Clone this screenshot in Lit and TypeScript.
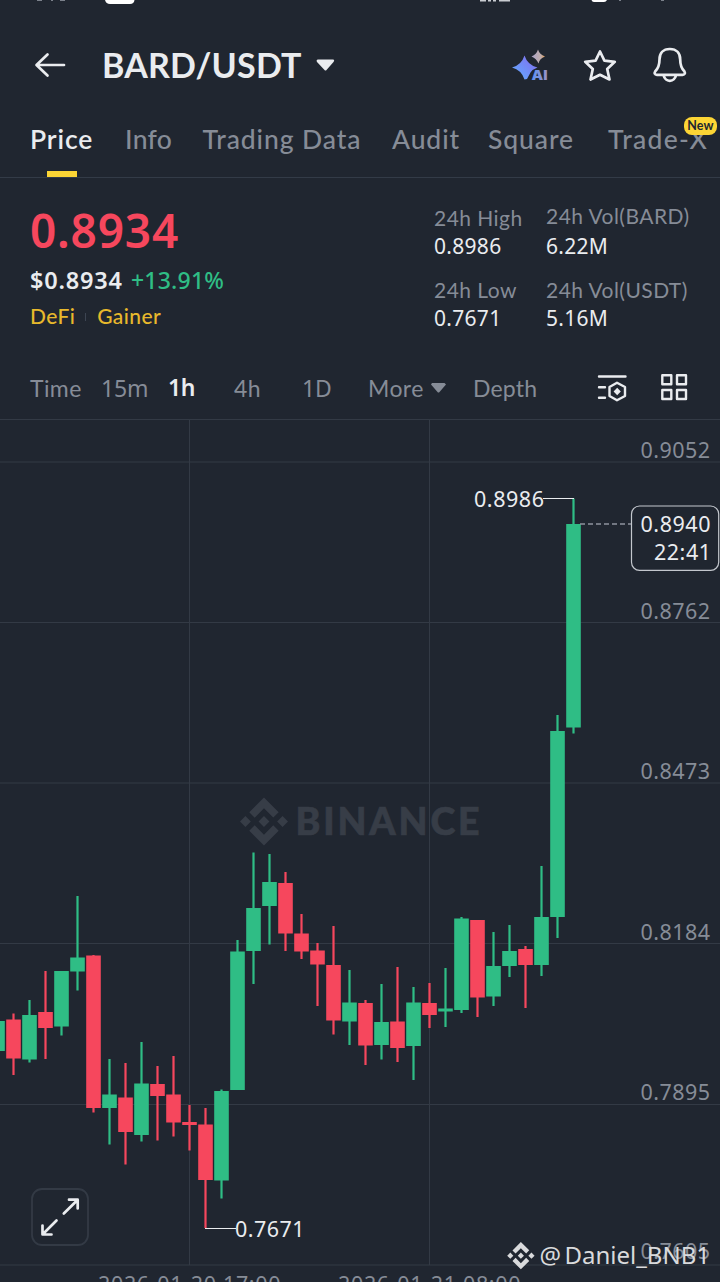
import { LitElement, html, svg, css } from "lit";
import { customElement, state } from "lit/decorators.js";
import { classMap } from "lit/directives/class-map.js";

type Candle = [dir: "u" | "d", high: number, top: number, bottom: number, low: number];

const CANDLES: Candle[] = [
  ["u", 1021, 1021, 1051, 1051],
  ["d", 1013.5, 1019.5, 1058.5, 1075],
  ["u", 1000, 1015, 1059.5, 1062.5],
  ["d", 971, 1012, 1028, 1059],
  ["u", 971, 971, 1026.5, 1035.5],
  ["u", 896, 957.5, 971.5, 990.5],
  ["d", 955, 955.5, 1108, 1112.5],
  ["u", 1059, 1094.5, 1108, 1144.5],
  ["d", 1063, 1097.5, 1132, 1164.5],
  ["u", 1042, 1083.5, 1135, 1141.5],
  ["d", 1066, 1084, 1096, 1140.5],
  ["d", 1056, 1094.5, 1122.5, 1136.5],
  ["d", 1105, 1122, 1125, 1150.5],
  ["d", 1108, 1124.5, 1180, 1228],
  ["u", 1089.5, 1091, 1180.5, 1198.5],
  ["u", 940, 951.5, 1090, 1090],
  ["u", 852.5, 908, 951, 984],
  ["u", 854, 882, 906, 944.5],
  ["d", 872, 883, 933.5, 951],
  ["d", 914, 933.5, 951.5, 959],
  ["d", 943, 950.5, 964.5, 1006],
  ["d", 926, 965, 1020.5, 1034.5],
  ["u", 970, 1002.5, 1021.5, 1045],
  ["d", 1000, 1003, 1045.5, 1065],
  ["u", 984, 1022, 1045, 1059.5],
  ["d", 967, 1021.5, 1048, 1062],
  ["u", 987, 1002.5, 1046, 1080],
  ["d", 983, 1003, 1015, 1028],
  ["u", 968, 1008.5, 1011.5, 1027],
  ["u", 917, 918.5, 1010, 1013],
  ["d", 920, 920, 997.5, 1017],
  ["u", 932, 966, 996.5, 1006],
  ["u", 925, 951, 966, 977],
  ["d", 946, 949, 965, 1008],
  ["u", 866, 917, 965, 976],
  ["u", 715, 731, 917, 938],
  ["u", 498.5, 524, 727.5, 733.5],
];

const AXIS: [string, number][] = [
  ["0.9052", 458],
  ["0.8762", 619],
  ["0.8473", 779],
  ["0.8184", 940],
  ["0.7895", 1100],
  ["0.7605", 1259],
];

const LOGO =
  "M16.624 13.9202l2.7175 2.7154-7.353 7.353-7.353-7.352 2.7175-2.7164 4.6355 4.6595 4.6356-4.6595zm4.6366-4.6366L24 12l-2.7154 2.7164L18.5682 12l2.6924-2.7164zm-9.272.001l2.7163 2.6914-2.7164 2.7174v-.001L9.2721 12l2.7164-2.7154zm-9.2722-.001L5.4088 12l-2.6914 2.6924L0 12l2.7164-2.7164zM11.9885.0115l7.353 7.329-2.7174 2.7154-4.6356-4.6356-4.6355 4.6595-2.7174-2.7154 7.353-7.353z";

@customElement("price-chart")
class PriceChart extends LitElement {
  static styles = css`
    :host { display: block; }
    svg { display: block; width: 720px; height: 872px; }
    .grid { stroke: #333a45; stroke-width: 1; }
    .u { fill: #2fbd85; }
    .d { fill: #f6475d; }
    text { font-family: "Noto Sans", sans-serif; font-size: 21.5px; }
    .axis { fill: #868c97; }
    .value { fill: #eaecef; }
    .lead { stroke: #eaecef; stroke-width: 1; }
    .dash { stroke: #8d939d; stroke-width: 1.4; stroke-dasharray: 5 3; }
    .tag { fill: #202630; stroke: #c3c7cd; stroke-width: 1.2; }
    .mark { fill: #373d47; }
    .brand { font-family: "Lato", sans-serif; font-size: 37.5px; font-weight: 900; stroke: #373d47; stroke-width: 0.7; }
    .button { fill: #202630; stroke: #333a45; stroke-width: 1.8; }
    .arrow { fill: none; stroke: #eaecef; stroke-width: 2.7; stroke-linejoin: round; stroke-linecap: round; }
    .sign { fill: #d9dadc; }
    .user { font-size: 24px; }
  `;

  render() {
    return html`<svg viewBox="0 410 720 872">
      <g class="mark">
        <path transform="translate(240 797.5) scale(2)" d=${LOGO} />
        <text class="brand" x="295.500" y="835" textLength="184">BINANCE</text>
      </g>
      <g class="grid">
        ${[419.5, 462, 622.5, 783, 943.5, 1104.5, 1265].map((y) => svg`<path d="M0 ${y}H720" />`)}
        ${[189.5, 429.5].map((x) => svg`<path d="M${x} 419.500V1265" />`)}
      </g>
      ${AXIS.map(([t, y]) => svg`<text class="axis" x="640.500" y=${y} textLength="69.500">${t}</text>`)}
      ${CANDLES.map(([k, h, t, b, l], i) => {
        const c = -2.5 + 16 * i;
        return svg`<g class=${k}>
          <rect x=${c - 1.1} y=${h} width="2.2" height=${l - h} />
          <rect x=${c - 7.3} y=${t} width="14.6" height=${b - t} />
        </g>`;
      })}
      <path class="lead" d="M543 498.500H574" />
      <text class="value" x="474" y="507" textLength="70">0.8986</text>
      <path class="lead" d="M205 1228.500H236" />
      <text class="value" x="235" y="1237" textLength="69.500">0.7671</text>
      <path class="dash" d="M580 524H631" />
      <rect class="tag" x="631.500" y="506" width="87.200" height="64.300" rx="8" />
      <text class="value" x="640.500" y="532" textLength="70">0.8940</text>
      <text class="value" x="654" y="560" textLength="57">22:41</text>
      <rect class="button" x="32" y="1189" width="56" height="56" rx="10" />
      <path class="arrow" d="M63.800 1213.500L77.500 1200M69 1199.700H77.700V1208.500M56.500 1220.500L43 1234M42.500 1225.500V1234.500H51.500" />
      <text class="axis" x="98" y="1291.500" textLength="182.500">2026-01-20 17:00</text>
      <text class="axis" x="338" y="1291.500" textLength="182.500">2026-01-21 08:00</text>
      <g class="sign">
        <path transform="translate(507.200 1242) scale(1.14)" d=${LOGO} />
        <text class="user" x="539.500" y="1264" textLength="20">@</text>
        <text class="user" x="564.500" y="1264" textLength="145.500">Daniel_BNB1</text>
      </g>
    </svg>`;
  }
}

@customElement("app-root")
class AppRoot extends LitElement {
  static styles = css`
    :host {
      display: block; width: 720px; height: 1282px; overflow: hidden;
      background: #202630; color: #eaecef; font-family: "Lato", sans-serif; white-space: nowrap;
    }
    svg { display: block; flex: none; }
    .n { font-family: "Noto Sans", sans-serif; }
    .status { height: 5px; }
    .head { display: flex; align-items: center; height: 120px; box-sizing: border-box; padding-left: 30px; }
    .pair { width: 213px; margin-left: 32px; font-size: 34px; font-weight: 700; letter-spacing: 0.2px; line-height: 40px; }
    .actions { display: flex; margin-left: 5px; }
    .line { stroke: #eaecef; fill: none; stroke-linecap: round; stroke-linejoin: round; stroke-width: 2.7; }
    .thin { stroke-width: 2.4; }
    .solid { fill: #eaecef; }
    .tabs {
      display: grid; grid-template-columns: 95px 77.500px 189.500px 96px 121px 111px;
      padding-left: 30px; height: 53px; box-sizing: border-box; border-bottom: 1px solid #333b47; color: #868c97;
      font-size: 26.5px; font-weight: 500; line-height: 28px; letter-spacing: 0.9px;
    }
    .tab { position: relative; }
    .tab:nth-child(2) { letter-spacing: 0.3px; }
    .tab:nth-child(6) { letter-spacing: 1.3px; margin-left: -1px; }
    .on { color: #eaecef; font-weight: 600; }
    .bar { width: 30px; height: 6px; margin: 18px 0 0 17px; background: #fcd535; }
    .new {
      position: absolute; left: 76px; top: -8px; width: 33px; height: 18px; border-radius: 8px; color: #202630;
      background: #fcd535; font-size: 12.5px; font-weight: 700; letter-spacing: 0.2px; line-height: 18px; text-align: center;
    }
    .summary { display: flex; height: 182px; box-sizing: border-box; padding: 27px 0 0 30px; }
    .quote { width: 404px; }
    .last { color: #f6475d; font-size: 46px; font-weight: 600; line-height: 51px; letter-spacing: 0.8px; }
    .fiat { display: flex; font-size: 23.5px; line-height: 28px; margin-top: 10px; font-weight: 600; }
    .usd { width: 101px; letter-spacing: 0.8px; }
    .gain { color: #2fbd85; font-weight: 500; letter-spacing: 0.2px; font-size: 23px; }
    .tags { display: flex; align-items: center; color: #e8b92c; font-size: 21px; font-weight: 500; line-height: 26px; margin-top: 9px; letter-spacing: 0.4px; }
    .sep { width: 1px; height: 8px; margin: 2px 11px 0 10px; background: #3d4552; }
    .stats { display: grid; grid-template-columns: 112px 150px; grid-auto-rows: 72px; font-size: 21px; margin-top: -1px; line-height: 28px; }
    .label { color: #868c97; letter-spacing: 0.45px; }
    .raised { position: relative; top: -2px; }
    .val { letter-spacing: 0.3px; font-size: 21px; }
    .frames { display: flex; align-items: center; height: 50px; padding-left: 30px; font-size: 23px; color: #868c97; line-height: 28px; margin-top: 3px; margin-bottom: -3px; letter-spacing: 0.4px; }
    .frame { flex: none; }
    .f0 { width: 71px; } .f1 { width: 67px; } .f2 { width: 66px; } .f3 { width: 68px; } .f4 { width: 66px; }
    .f5 { width: 63px; } .f6 { width: 121px; letter-spacing: 0.2px; }
    .tight { letter-spacing: -0.2px; }
    .hot { color: #eaecef; font-weight: 600; padding-bottom: 2px; letter-spacing: -0.4px; }
    .dim { fill: #868c97; }
    .ai { font: 900 13px "Inter", sans-serif; }
  `;

  @state() private tab = "Price";
  @state() private frame = "1h";

  render() {
    const tabs = ["Price", "Info", "Trading Data", "Audit", "Square", "Trade-X"];
    const stats = [
      ["24h High", "0.8986"], ["24h Vol(BARD)", "6.22M"],
      ["24h Low", "0.7671"], ["24h Vol(USDT)", "5.16M"],
    ];
    const frames = ["Time", "15m", "1h", "4h", "1D", "More"];
    return html`
      <svg class="status" width="720" height="5" viewBox="0 0 720 5">
        <path fill="#fff" d="M105 0H134.500Q134 4 130 4H110Q106 4 105 0ZM591.500 0H607Q606 2 604 2H594Q592 2 591.500 0Z" />
        <path fill="#c9ccd1" d="M480 0h6v1.500h-6zM488 0h3v1.500h-3zM493 0h3v1.500h-3zM499 0h11v1.500h-11z" />
        <path fill="#7b818b" d="M37 0h5v1h-5zM51 0h2v1h-2zM60 0h5v1h-5zM619 0h2v1h-2zM661 0h3v1h-3z" />
      </svg>
      <div class="head">
        <svg width="40" height="40" viewBox="30 45 40 40">
          <path class="line" d="M64 65H37M47.500 54.500L36.500 65L47.500 75.500" />
        </svg>
        <div class="pair">BARD/USDT</div>
        <svg width="20" height="14" viewBox="315 58 20 14">
          <path class="solid" d="M318 59.500H333Q335 60 333.500 62L326.500 70Q325.500 71 324.500 70L317 62Q315.800 60 318 59.500Z" />
        </svg>
        <svg width="355" height="44" viewBox="335 43 355 44">
          <defs>
            <linearGradient id="a" x1="0" y1="1" x2="1" y2="0">
              <stop offset="0" stop-color="#5fb0ff" /><stop offset="1" stop-color="#8468ee" />
            </linearGradient>
            <linearGradient id="b" x1="0" y1="0.500" x2="1" y2="0.500">
              <stop offset="0" stop-color="#aaa3c8" /><stop offset="0.700" stop-color="#c0adab" /><stop offset="1" stop-color="#e5a05a" />
            </linearGradient>
            <linearGradient id="c"><stop offset="0" stop-color="#5d92f5" /><stop offset="1" stop-color="#9d93c4" /></linearGradient>
          </defs>
          <path fill="url(#a)" d="M524.500 55.500Q527.500 65 537.500 67.500Q533 69 530.500 72.500L527 79L524.500 79.500Q521.500 70 512 67.500Q521.500 65 524.500 55.500Z" />
          <path fill="url(#b)" d="M538 49.500Q539.500 54.500 545 56.500Q539.500 58.500 538.500 63.500Q536.500 58.500 531.500 56.500Q536.500 54.500 538 49.500Z" />
          <text class="ai" fill="url(#c)" x="531.500" y="79.500" textLength="16" lengthAdjust="spacingAndGlyphs">AI</text>
          <path class="line" d="M600 51.500L604.400 60.600L614.800 61.800L607.200 69L609.500 79.500L600 74.800L590.500 79.500L592.800 69L585.200 61.800L595.600 60.600Z" />
          <path class="line" d="M669.800 49C663 49 659.500 53.500 659.500 59.500C659.500 66 658 68.500 655.300 71.200Q653.500 74.500 657 74.800H682.500Q686 74.500 684.300 71.200C681.500 68.500 680.200 66 680.200 59.500C680.200 53.500 676.600 49 669.800 49ZM663.600 75.500Q665 80.600 669.800 80.800Q674.600 80.600 676 75.500" />
        </svg>
      </div>
      <div class="tabs">
        ${tabs.map((t) => html`<div class=${classMap({ tab: true, on: t === this.tab })} @click=${() => (this.tab = t)}>
          ${t}${t === this.tab ? html`<div class="bar"></div>` : ""}${t === "Trade-X" ? html`<span class="new">New</span>` : ""}
        </div>`)}
      </div>
      <div class="summary">
        <div class="quote">
          <div class="last n">0.8934</div>
          <div class="fiat n"><span class="usd">$0.8934</span><span class="gain">+13.91%</span></div>
          <div class="tags"><span>DeFi</span><i class="sep"></i><span>Gainer</span></div>
        </div>
        <div class="stats">
          ${stats.map(([l, v], i) => html`<div>
            <div class=${classMap({ label: true, raised: i === 1 })}>${l}</div><div class="val n">${v}</div>
          </div>`)}
        </div>
      </div>
      <div class="frames">
        ${frames.map((f, i) => html`<span @click=${() => (this.frame = f)}
          class=${classMap({ frame: true, ["f" + i]: true, n: /^1/.test(f), tight: /^1/.test(f), hot: f === this.frame })}>${f}</span>`)}
        <svg width="42" height="12" viewBox="431 383 42 12"><path class="dim" d="M432 384H444.500L446 385.500L439.500 393Q438.500 394 437.500 393L431 385.500Z" /></svg>
        <span class="frame f6">Depth</span>
        <svg width="100" height="34" viewBox="594 372 100 34">
          <path class="line thin" d="M599 377.500H625.500M599 388.300H605M599 398.700H605M617 383.700L625 388V397L617 401.300L609.500 397V388ZM662.300 376.300h9v9h-9ZM677 376.300h9v9h-9ZM662.300 391h9v9h-9ZM677 391h9v9h-9Z" />
          <path class="solid" d="M617.200 388.800L620.800 392.500L617.200 396.200L613.600 392.500Z" />
        </svg>
      </div>
      <price-chart></price-chart>`;
  }
}
